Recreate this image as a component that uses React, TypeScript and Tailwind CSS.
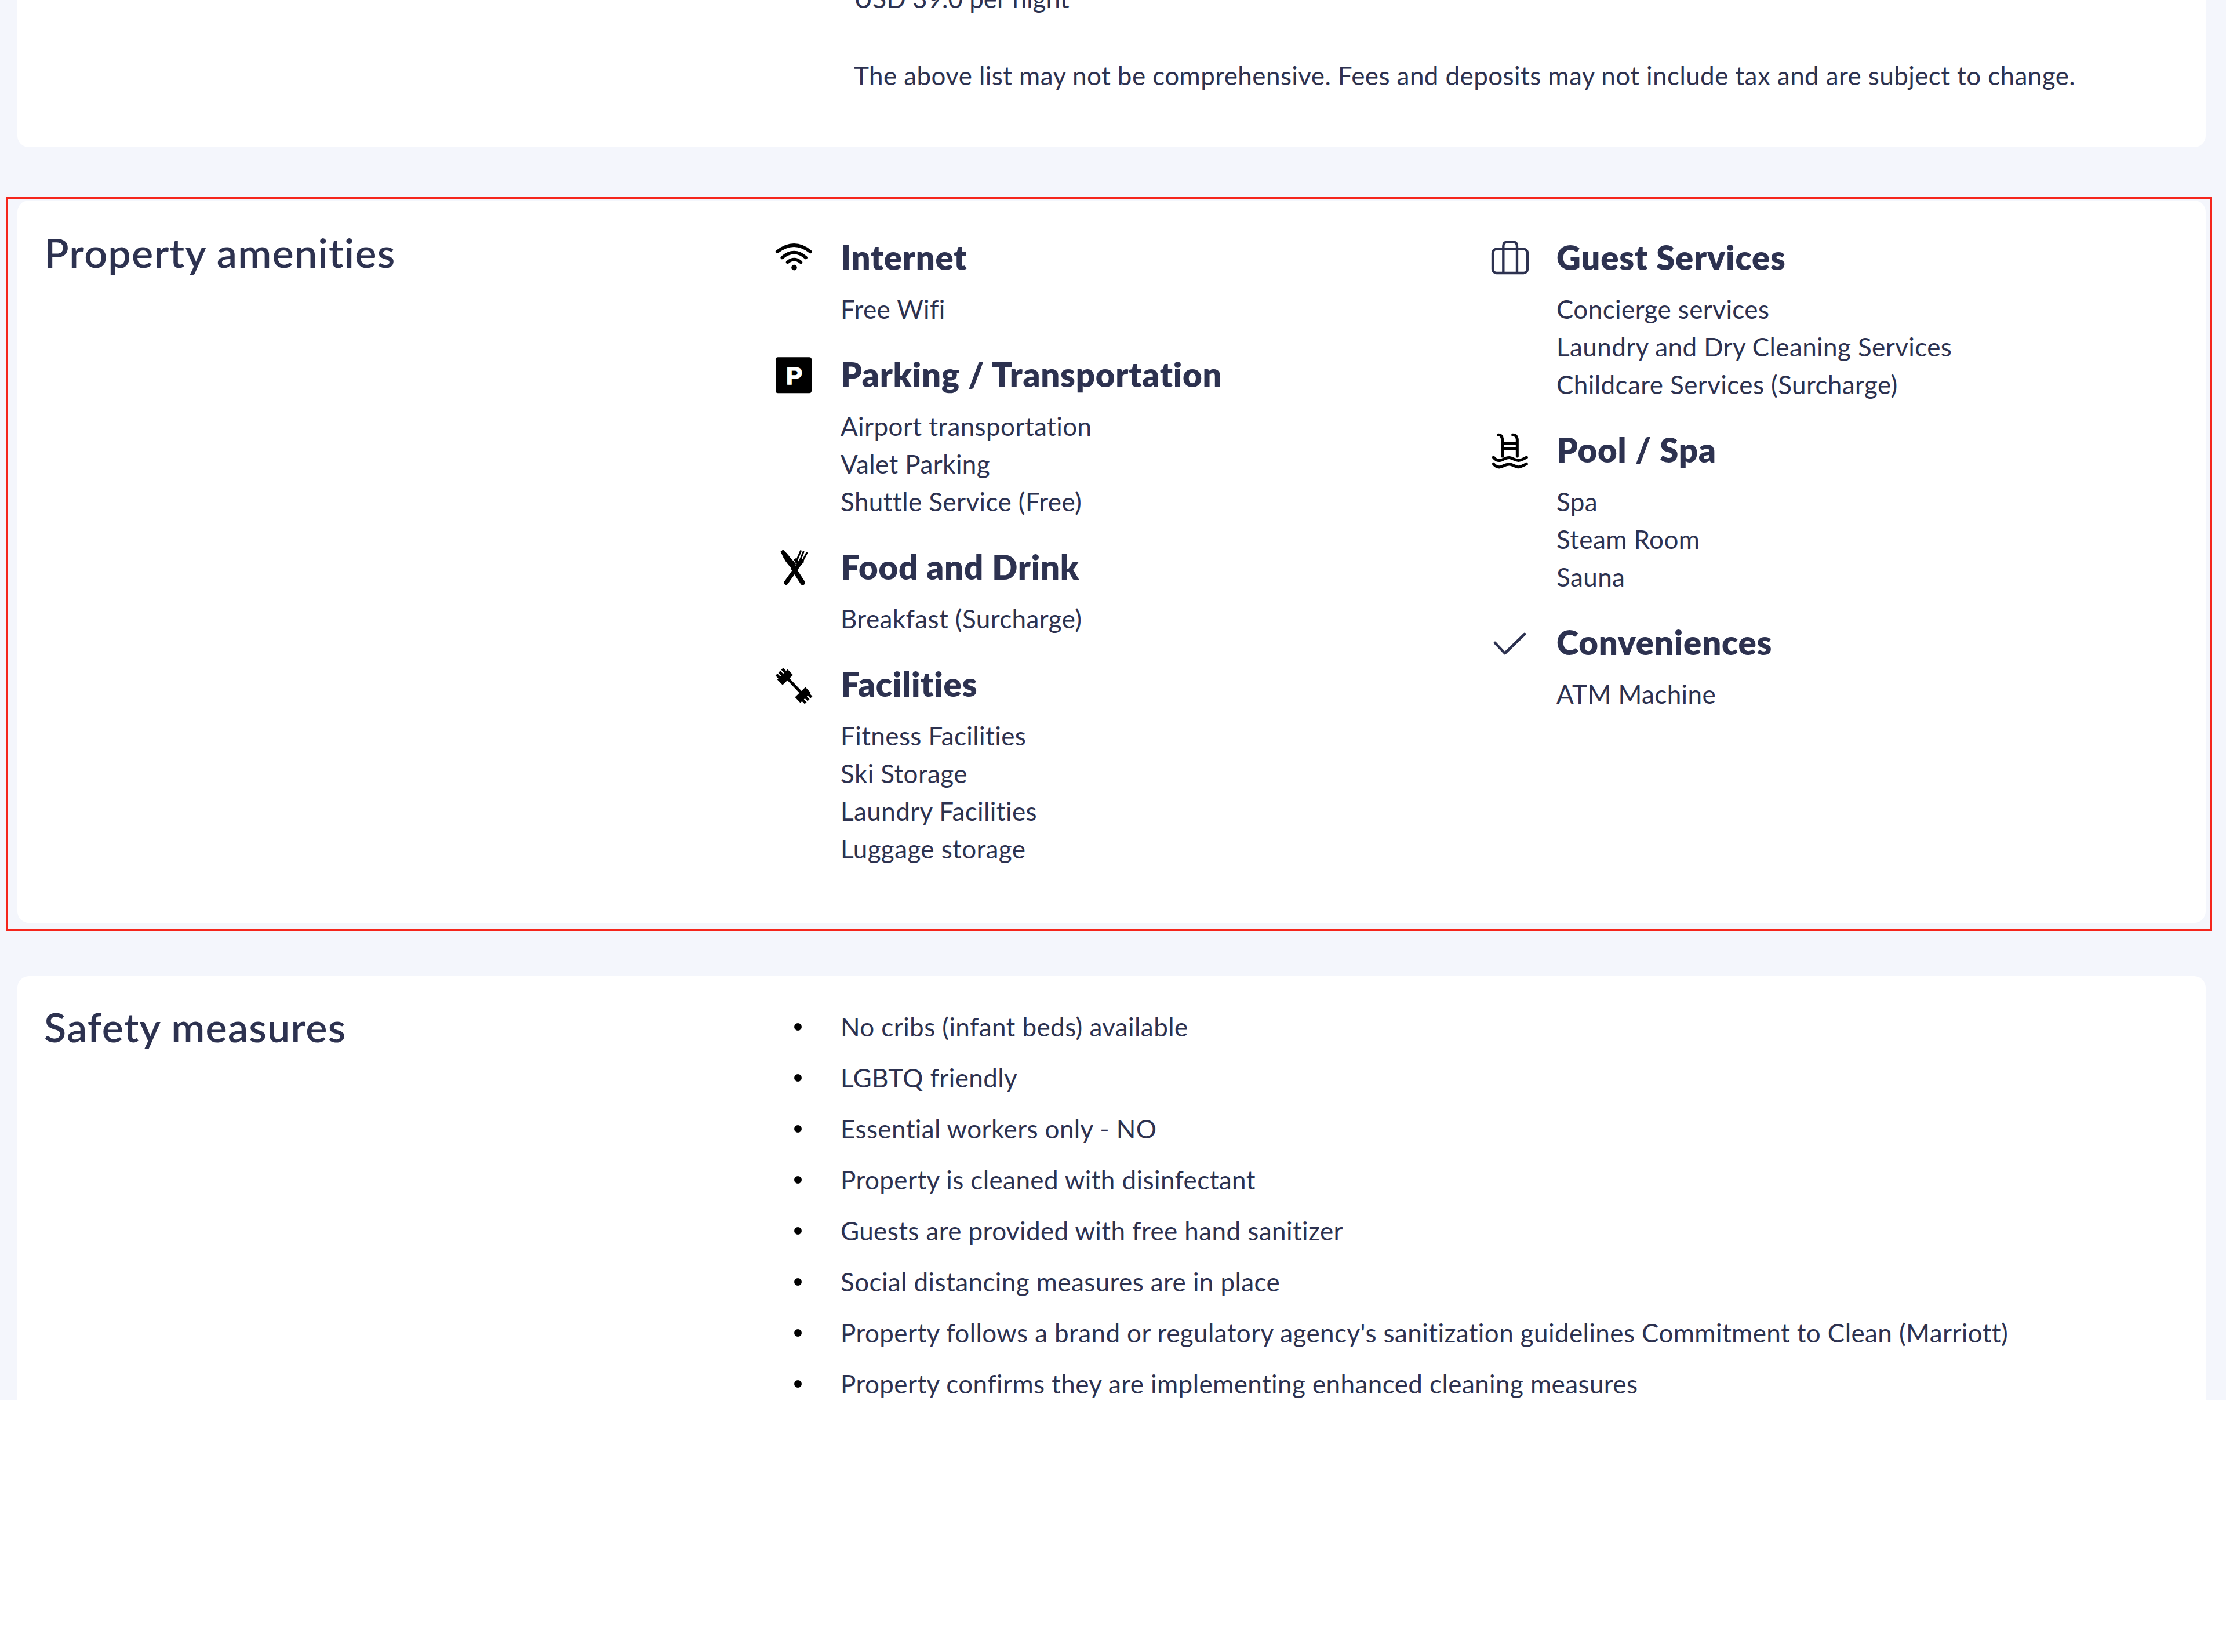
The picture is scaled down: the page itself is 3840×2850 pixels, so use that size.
const font = "[font-family:Lato,'Open_Sans',sans-serif]";

const groupsLeft = [
  { title: "Internet", icon: "wifi", items: ["Free Wifi"] },
  { title: "Parking / Transportation", icon: "parking", items: ["Airport transportation", "Valet Parking", "Shuttle Service (Free)"] },
  { title: "Food and Drink", icon: "food", items: ["Breakfast (Surcharge)"] },
  { title: "Facilities", icon: "gym", items: ["Fitness Facilities", "Ski Storage", "Laundry Facilities", "Luggage storage"] },
];

const groupsRight = [
  { title: "Guest Services", icon: "case", items: ["Concierge services", "Laundry and Dry Cleaning Services", "Childcare Services (Surcharge)"] },
  { title: "Pool / Spa", icon: "pool", items: ["Spa", "Steam Room", "Sauna"] },
  { title: "Conveniences", icon: "check", items: ["ATM Machine"] },
];

const safety = [
  "No cribs (infant beds) available",
  "LGBTQ friendly",
  "Essential workers only - NO",
  "Property is cleaned with disinfectant",
  "Guests are provided with free hand sanitizer",
  "Social distancing measures are in place",
  "Property follows a brand or regulatory agency's sanitization guidelines Commitment to Clean (Marriott)",
  "Property confirms they are implementing enhanced cleaning measures",
];

// all icons are drawn on a 300 unit box, shown at 100px
const Icon = ({ name }: { name: string }) => (
  <svg viewBox="0 0 300 300" className="w-[100px] h-[100px] shrink-0 mr-[30px]" fill="none">
    {name === "wifi" && (
      <g stroke="#000" strokeWidth="17" strokeLinecap="round">
        <path d="M62 106Q150 38 234 106" />
        <path d="M88 136Q150 84 210 136" />
        <path d="M116 160Q150 132 184 160" />
        <circle cx="150" cy="188" r="6" fill="#000" />
      </g>
    )}
    {name === "parking" && (
      <g>
        <rect x="54" y="46" width="186" height="186" rx="12" fill="#000" />
        <text x="150" y="187" textAnchor="middle" fill="#fff" stroke="#fff" strokeWidth="5" fontSize="126" fontWeight="700" fontFamily="Liberation Sans, sans-serif">P</text>
      </g>
    )}
    {name === "food" && (
      <g transform="translate(0 -9)" stroke="#000" strokeLinecap="round">
        <path d="M82 66Q88 54 98 60L158 130L142 154Q105 124 82 66Z" fill="#000" strokeWidth="3" />
        <path d="M145 150L194 226" strokeWidth="25" />
        <path d="M188 112L108 226" strokeWidth="22" />
        <path d="M160 118L184 62M175 124L198 66M186 128L215 72" strokeWidth="9" />
        <path d="M158 108Q172 136 192 118" strokeWidth="16" />
      </g>
    )}
    {name === "gym" && (
      <g stroke="#000">
        <path d="M115 105L195 190" strokeWidth="15" />
        <path d="M76 126L130 74" strokeWidth="40" />
        <path d="M66 104L106 64" strokeWidth="36" strokeDasharray="14 7" />
        <path d="M168 218L222 166" strokeWidth="40" />
        <path d="M194 228L234 188" strokeWidth="30" strokeDasharray="14 7" />
      </g>
    )}
    {name === "case" && (
      <g transform="translate(0 4)" stroke="#2d3250" strokeWidth="13">
        <rect x="60" y="88" width="180" height="124" rx="20" />
        <path d="M115 88V212M186 88V212" />
        <path d="M115 88V72Q115 52 135 52H166Q186 52 186 72V88" />
      </g>
    )}
    {name === "pool" && (
      <g stroke="#000" strokeWidth="15" strokeLinecap="round">
        <path d="M90 58Q107 58 110 80V168M164 58Q184 58 187 80V168M110 102H187M110 128H187" />
        <path d="M64 174C78 190 92 194 106 188C122 180 134 174 150 176C166 178 178 192 196 190C210 188 224 180 235 174" />
        <path d="M64 208C78 224 92 228 106 222C122 214 134 208 150 210C166 212 178 226 196 224C210 222 224 214 235 208" />
      </g>
    )}
    {name === "check" && (
      <path d="M72 138L123 192L225 93" stroke="#2d3250" strokeWidth="14" strokeLinecap="round" strokeLinejoin="round" />
    )}
  </svg>
);

const Group = ({ title, icon, items }: { title: string; icon: string; items: string[] }) => (
  <div className="flex mb-[35px]">
    <Icon name={icon} />
    <div>
      <h4 className="text-[58px] leading-[90px] font-extrabold tracking-[0.8px] mb-[12px]">{title}</h4>
      {items.map((item) => (
        <p key={item} className="text-[44px] leading-[65px] tracking-[0.4px]">{item}</p>
      ))}
    </div>
  </div>
);

export default function App() {
  return (
    <div className="relative h-[2415px] overflow-hidden bg-[#f4f6fc] pl-[30px] pr-[35px]">
      <div className={`${font} text-[#2d3250] flex flex-col gap-[92px]`}>
        <section className="bg-white rounded-b-[20px] h-[254px] pl-[1443px] text-[44px] leading-[65px] tracking-[0.4px]">
          <p className="-mt-[35px] mb-[68px] tracking-normal">USD 39.0 per night</p>
          <p>The above list may not be comprehensive. Fees and deposits may not include tax and are subject to change.</p>
        </section>

        <section className="bg-white rounded-[20px] h-[1246px] flex pl-[46px] pt-[53px]">
          <h3 className="w-[1244px] shrink-0 text-[70px] leading-[72px] font-semibold tracking-[1.2px]">Property amenities</h3>
          <div className="flex">
            <div className="w-[1235px]">
              {groupsLeft.map((g) => <Group key={g.title} {...g} />)}
            </div>
            <div>
              {groupsRight.map((g) => <Group key={g.title} {...g} />)}
            </div>
          </div>
        </section>

        <section className="bg-white rounded-t-[20px] h-[900px] flex pl-[46px] pt-[51px]">
          <h3 className="w-[1244px] shrink-0 text-[70px] leading-[72px] font-semibold tracking-[1.2px]">Safety measures</h3>
          <ul className="pl-[130px]">
            {safety.map((s) => (
              <li key={s} className="relative text-[44px] leading-[72px] tracking-[0.4px] mb-[16px]">
                <span className="absolute -left-[80px] top-[30px] w-[13px] h-[13px] rounded-full bg-black" />
                {s}
              </li>
            ))}
          </ul>
        </section>
      </div>

      {/* red annotation box on top of the page */}
      <div className="absolute left-[10px] top-[340px] w-[3806px] h-[1266px] border-[4px] border-[#f5261c] pointer-events-none" />
    </div>
  );
}
